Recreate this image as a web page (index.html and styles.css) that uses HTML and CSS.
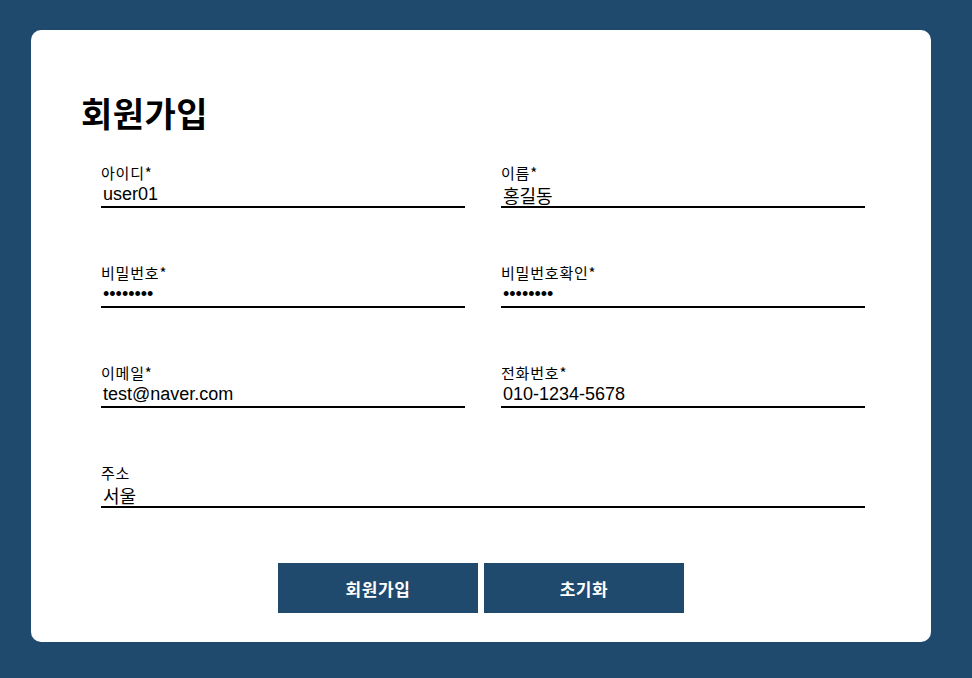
FILE: index.html
```html
<!DOCTYPE html>
<html lang="ko">
<head>
<meta charset="utf-8">
<title>회원가입</title>
<link rel="stylesheet" href="styles.css">
</head>
<body>
<div class="page">
  <form class="card">
    <h1 class="title">회원가입</h1>
    <div class="fields">
      <label class="field">
        <span class="label">아이디*</span>
        <input class="input" type="text" value="user01">
      </label>
      <label class="field">
        <span class="label">이름*</span>
        <input class="input" type="text" value="홍길동">
      </label>
      <label class="field">
        <span class="label">비밀번호*</span>
        <input class="input" type="password" value="12345678">
      </label>
      <label class="field">
        <span class="label">비밀번호확인*</span>
        <input class="input" type="password" value="12345678">
      </label>
      <label class="field">
        <span class="label">이메일*</span>
        <input class="input" type="text" value="test@naver.com">
      </label>
      <label class="field">
        <span class="label">전화번호*</span>
        <input class="input" type="text" value="010-1234-5678">
      </label>
      <label class="field field-wide">
        <span class="label">주소</span>
        <input class="input" type="text" value="서울">
      </label>
    </div>
    <div class="actions">
      <button class="btn" type="button">회원가입</button>
      <button class="btn" type="button">초기화</button>
    </div>
  </form>
</div>
</body>
</html>
```

FILE: styles.css
```css
html, body {
  margin: 0;
  padding: 0;
  background: #1f4a6d;
  height: 100%;
}
body {
  font-family: "Noto Sans CJK KR", "Liberation Sans", sans-serif;
}
.page {
  padding: 30px 0 0 31px;
}
.card {
  box-sizing: border-box;
  width: 900px;
  height: 612px;
  background: #ffffff;
  border-radius: 10px;
  padding: 60px 50px 29px;
  display: flex;
  flex-direction: column;
}
.title {
  margin: 0;
  font-size: 34px;
  font-weight: 700;
  line-height: 46px;
  letter-spacing: 0.5px;
  color: #000;
}
.fields {
  margin: 27px 0 0 20px;
  width: 764px;
  display: grid;
  grid-template-columns: 364px 364px;
  column-gap: 36px;
  row-gap: 55px;
}
.field {
  display: flex;
  flex-direction: column;
}
.field-wide {
  grid-column: 1 / 3;
}
.label {
  font-size: 15px;
  line-height: 20px;
  letter-spacing: 0.8px;
  color: #000;
}
.input {
  box-sizing: border-box;
  height: 25px;
  width: 100%;
  border: none;
  border-bottom: 2px solid #000;
  outline: none;
  padding: 0 2px;
  margin: 0;
  font-family: "Liberation Sans", "Noto Sans CJK KR", sans-serif;
  font-size: 18px;
  color: #000;
  background: transparent;
}
.actions {
  margin-top: 55px;
  display: flex;
  justify-content: center;
  gap: 6px;
}
.btn {
  width: 200px;
  height: 50px;
  border: none;
  background: #1f4a6d;
  color: #fff;
  font-family: "Noto Sans CJK KR", sans-serif;
  font-size: 17px;
  font-weight: 700;
  letter-spacing: 0.6px;
  cursor: pointer;
}
```
